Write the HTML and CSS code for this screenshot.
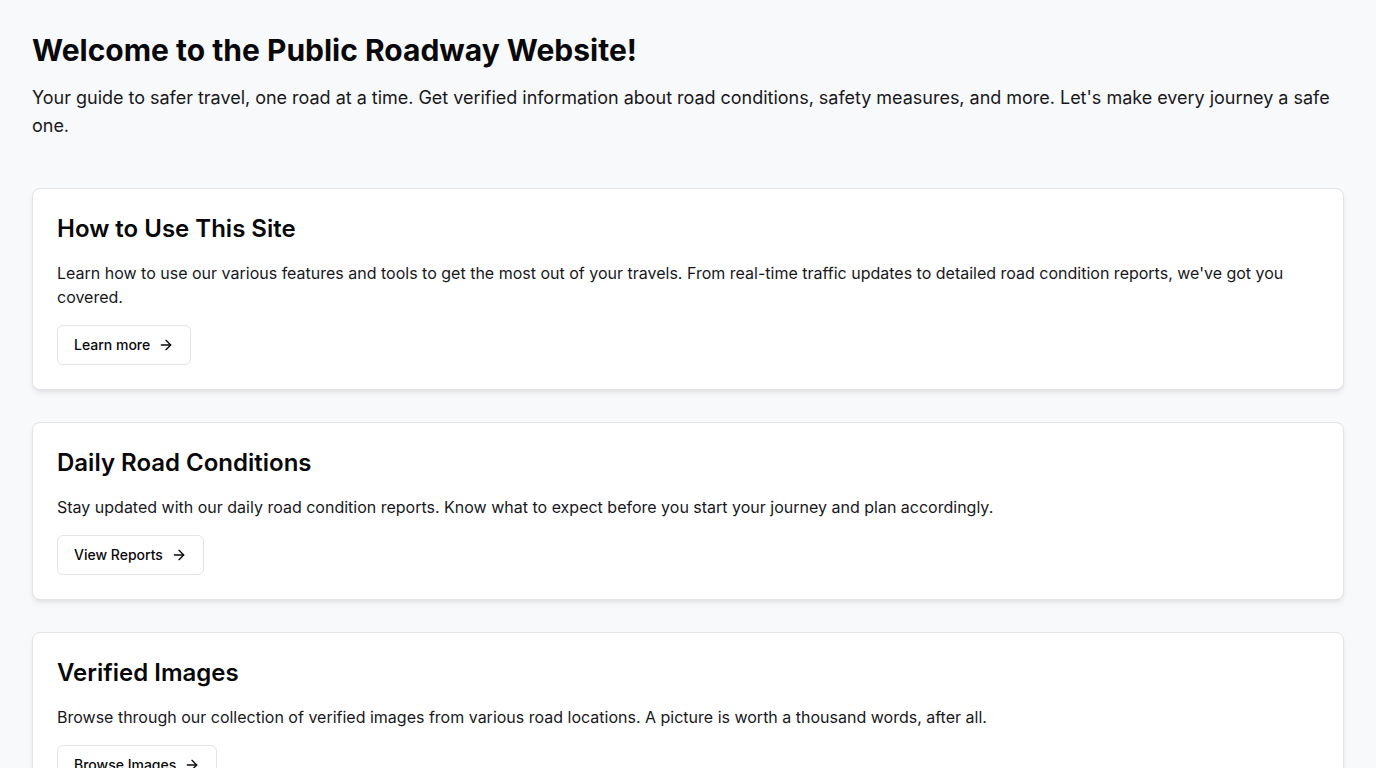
FILE: index.html
```html
<!DOCTYPE html>
<html lang="en">
<head>
<meta charset="utf-8">
<title>Public Roadway Website</title>
<link rel="stylesheet" href="styles.css">
</head>
<body>
<main class="page">
  <header class="intro">
    <h1>Welcome to the Public Roadway Website!</h1>
    <p>Your guide to safer travel, one road at a time. Get verified information about road conditions, safety measures, and more. Let's make every journey a safe one.</p>
  </header>
  <section class="cards">
    <article class="card">
      <h2>How to Use This Site</h2>
      <p>Learn how to use our various features and tools to get the most out of your travels. From real-time traffic updates to detailed road condition reports, we've got you covered.</p>
      <a class="btn" href="#">Learn more <svg viewBox="0 0 24 24" width="16" height="16" fill="none" stroke="currentColor" stroke-width="2" stroke-linecap="round" stroke-linejoin="round"><path d="M5 12h14"/><path d="m12 5 7 7-7 7"/></svg></a>
    </article>
    <article class="card">
      <h2>Daily Road Conditions</h2>
      <p>Stay updated with our daily road condition reports. Know what to expect before you start your journey and plan accordingly.</p>
      <a class="btn" href="#">View Reports <svg viewBox="0 0 24 24" width="16" height="16" fill="none" stroke="currentColor" stroke-width="2" stroke-linecap="round" stroke-linejoin="round"><path d="M5 12h14"/><path d="m12 5 7 7-7 7"/></svg></a>
    </article>
    <article class="card">
      <h2>Verified Images</h2>
      <p>Browse through our collection of verified images from various road locations. A picture is worth a thousand words, after all.</p>
      <a class="btn" href="#">Browse Images <svg viewBox="0 0 24 24" width="16" height="16" fill="none" stroke="currentColor" stroke-width="2" stroke-linecap="round" stroke-linejoin="round"><path d="M5 12h14"/><path d="m12 5 7 7-7 7"/></svg></a>
    </article>
  </section>
</main>
</body>
</html>
```

FILE: styles.css
```css
* { box-sizing: border-box; }
html, body { margin: 0; padding: 0; }
body {
  background: #f8f9fa;
  font-family: Inter, "Noto Sans", sans-serif;
  color: #09090b;
}
.page {
  padding: 32px;
}
.intro h1 {
  margin: 0;
  font-size: 30px;
  line-height: 36px;
  font-weight: 700;
}
.intro p {
  margin: 16px 0 0;
  font-size: 18px;
  line-height: 28px;
  color: #18181b;
  letter-spacing: -0.02px;
}
.cards {
  margin-top: 48px;
  display: flex;
  flex-direction: column;
  gap: 32px;
}
.card {
  background: #fff;
  border: 1px solid #e4e4e7;
  border-radius: 8px;
  padding: 24px;
  box-shadow: 0 4px 6px -1px rgba(0,0,0,0.08), 0 2px 4px -2px rgba(0,0,0,0.06);
}
.card h2 {
  margin: 0;
  font-size: 24px;
  line-height: 32px;
  font-weight: 600;
}
.card p {
  margin: 16px 0 0;
  font-size: 16px;
  line-height: 24px;
  color: #18181b;
}
.btn {
  margin-top: 16px;
  display: inline-flex;
  align-items: center;
  gap: 8px;
  height: 40px;
  padding: 0 16px 1px;
  border: 1px solid #e4e4e7;
  border-radius: 6px;
  background: #fff;
  color: #09090b;
  font-size: 14px;
  font-weight: 500;
  text-decoration: none;
}
```
